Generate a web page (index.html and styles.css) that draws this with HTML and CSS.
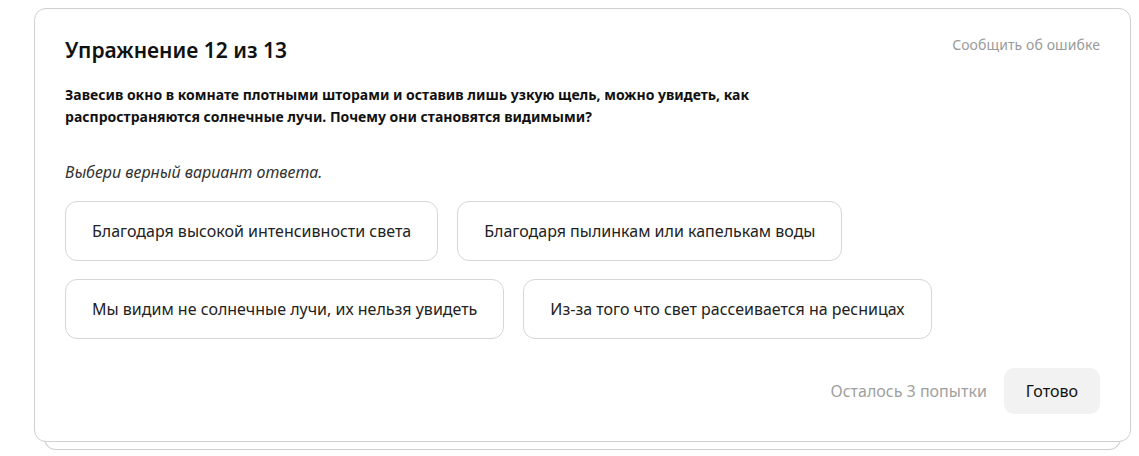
FILE: index.html
```html
<!DOCTYPE html>
<html lang="ru">
<head>
<meta charset="utf-8">
<link rel="stylesheet" href="styles.css">
</head>
<body>
<div class="stack">
  <div class="card">
    <div class="head">
      <h1 class="title">Упражнение 12 из 13</h1>
      <a class="report">Сообщить об ошибке</a>
    </div>
    <p class="question">Завесив окно в комнате плотными шторами и оставив лишь узкую щель, можно увидеть, как распространяются солнечные лучи. Почему они становятся видимыми?</p>
    <p class="hint">Выбери верный вариант ответа.</p>
    <div class="options">
      <div class="row">
        <button class="opt">Благодаря высокой интенсивности света</button>
        <button class="opt">Благодаря пылинкам или капелькам воды</button>
      </div>
      <div class="row">
        <button class="opt">Мы видим не солнечные лучи, их нельзя увидеть</button>
        <button class="opt">Из-за того что свет рассеивается на ресницах</button>
      </div>
    </div>
    <div class="foot">
      <span class="tries">Осталось 3 попытки</span>
      <button class="done">Готово</button>
    </div>
  </div>
  <div class="under"></div>
</div>
</body>
</html>
```

FILE: styles.css
```css
* { box-sizing: border-box; }
html, body { margin: 0; background: #fff; }
body {
  font-family: "Noto Sans", "Open Sans", sans-serif;
  color: #000;
  padding: 8px 8px 0 34px;
}
.stack { width: 1097px; }
.card {
  position: relative;
  z-index: 1;
  background: #fff;
  border: 1px solid #cfcfcf;
  border-radius: 12px;
  padding: 27px 30px 26px 30px;
  height: 434px;
}
.under {
  margin: -12px 10px 0 10px;
  height: 20px;
  border: 1px solid #cfcfcf;
  border-top: none;
  border-radius: 0 0 12px 12px;
}
.head {
  display: flex;
  justify-content: space-between;
  align-items: flex-start;
}
.title {
  margin: 0;
  font-size: 21px;
  font-weight: 600;
  line-height: 28px;
  color: #111;
}
.report {
  font-size: 14px;
  color: #9a9a9a;
  line-height: 20px;
  margin-top: -1px;
  letter-spacing: 0.1px;
}
.question {
  margin: 20px 0 0 0;
  max-width: 740px;
  font-size: 14px;
  font-weight: 700;
  line-height: 22px;
  color: #111;
}
.hint {
  margin: 33px 0 0 0;
  font-size: 16px;
  font-style: italic;
  line-height: 22px;
  color: #333;
}
.options {
  margin-top: 18px;
  display: flex;
  flex-direction: column;
  gap: 18px;
}
.row { display: flex; gap: 19px; }
.opt {
  font-family: inherit;
  font-size: 16px;
  color: #222;
  background: #fff;
  border: 1px solid #d6d6d6;
  border-radius: 12px;
  height: 60px;
  padding: 0 26px;
  line-height: 22px;
}
.foot {
  margin-top: 29px;
  display: flex;
  justify-content: flex-end;
  align-items: center;
  gap: 17px;
}
.tries {
  font-size: 16px;
  color: #a0a0a0;
}
.done {
  font-family: inherit;
  font-size: 16px;
  color: #111;
  background: #f2f2f2;
  border: none;
  border-radius: 10px;
  height: 46px;
  padding: 0 22px;
}
```
